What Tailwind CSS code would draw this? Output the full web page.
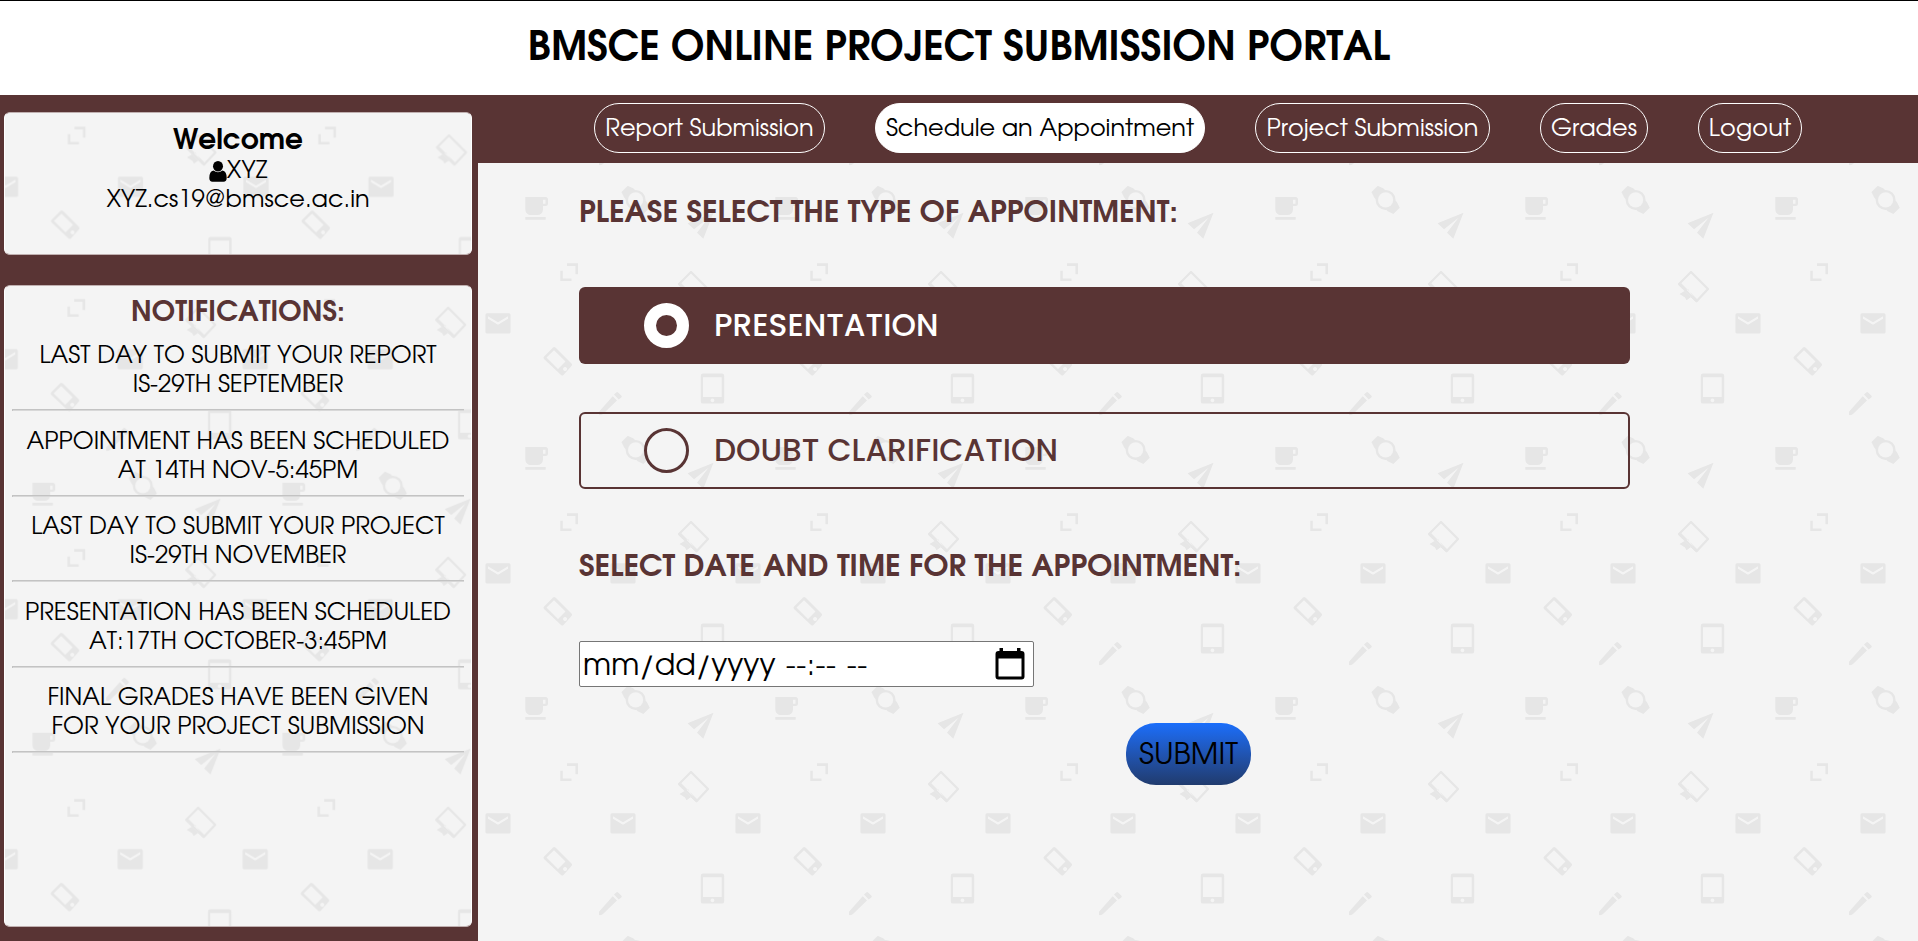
<!DOCTYPE html>
<html lang="en">
<head>
<meta charset="utf-8">
<title>BMSCE Online Project Submission Portal</title>
<script src="https://cdn.jsdelivr.net/npm/@tailwindcss/browser@4"></script>
</head>
<body class="h-[941px] overflow-hidden bg-white font-['Century_Gothic','TeX_Gyre_Adventor','Lato',sans-serif] text-black [font-kerning:none]">
<svg class="absolute size-0" aria-hidden="true">
  <defs>
    <g id="doodles" fill="#e6e6e6">
      <path d="M47.3 37H67.5a2.5 2.5 0 0 1 2.5 2.5v4a2.5 2.5 0 0 1-2.5 2.5H65v3.500a5.500 5.500 0 0 1-5.500 5.500h-6.700a5.500 5.500 0 0 1-5.500-5.500zM65 39.700v4h2.500v-4zM47.300 57h20.400v2.800H47.300z" fill-rule="evenodd"/>
      <g transform="translate(157.600 39.900) rotate(45)"><path d="M-15.500-4.500L-9.500-6.500H9.500L15.500-4.500V4.500L9.500 6.500H-9.500L-15.500 4.500z"/><circle r="10"/><circle r="7.600" fill="#f4f4f4"/></g>
      <path d="M235.500 52.700L209.500 63.300L216 69.200L230.500 57.800L219 72.700L225.300 78.700z"/>
      <path d="M89 103.300h11v11h-2.600v-8.400H89zM82.300 110.700h2.500v7.800h8.700v2.500H82.300z"/>
      <path d="M213 112L201 124L218.500 141.300L230 129z" fill="none" stroke="#e6e6e6" stroke-width="2.300" stroke-linejoin="round"/>
      <path d="M200.500 125L218 142L220.500 140.500L203 123zM201.500 134L210 129L214.500 136L208.500 140.300L207 137.500z"/>
      <path id="mail" d="M9 153.300H31a1.600 1.600 0 0 1 1.600 1.600V172a1.600 1.600 0 0 1-1.600 1.600H9A1.600 1.600 0 0 1 7.400 172V155A1.600 1.600 0 0 1 9 153.300zM10 156.200V158.700L20 164.700L30 158.700V156.200L20 162.200z" fill-rule="evenodd"/>
      <use href="#mail" x="125"/>
      <path d="M75 187.500a1.800 1.800 0 0 1 2.500 0L93.500 203.500a1.800 1.800 0 0 1 0 2.500L85.500 215a1.800 1.800 0 0 1-2.500 0L66 199a1.800 1.800 0 0 1 0-2.500zM76 190.300L68.500 197.600L80 209L87.500 201.500zM87 207a2 2 0 1 0 .1 0z" fill-rule="evenodd"/>
      <path d="M225 213.600H244a2.200 2.200 0 0 1 2.200 2.200V241.400a2.200 2.200 0 0 1-2.200 2.200H225a2.200 2.200 0 0 1-2.200-2.200V215.800A2.200 2.200 0 0 1 225 213.600zM225 217.300V237H243.700V217.300zM234.400 238.500a1.900 1.900 0 1 0 .1 0z" fill-rule="evenodd"/>
      <path id="pencil" d="M121 251.700L134.700 236.200L139 240.500L125 254Q123.500 255.500 121 255zM136 234.500L138.500 232.200Q139.500 231.700 140.500 232.700L143.500 235.700Q144 236.500 143.300 237.500L140.800 239.500z"/>
      <use href="#pencil" y="-250"/>
    </g>
    <pattern id="main-pattern" width="250" height="250" patternUnits="userSpaceOnUse" patternTransform="translate(0 -3)"><use href="#doodles"/></pattern>
    <pattern id="welcome-pattern" width="250.500" height="250" patternUnits="userSpaceOnUse" patternTransform="translate(-19.500 -89.600)"><use href="#doodles"/></pattern>
    <pattern id="notice-pattern" width="250" height="250" patternUnits="userSpaceOnUse" patternTransform="translate(-19.800 -90.200)"><use href="#doodles"/></pattern>
  </defs>
</svg>

<header class="flex h-[95px] items-center justify-center border-t border-black pt-[2px]">
  <h1 class="text-[40px] leading-[48px] font-bold whitespace-nowrap">BMSCE ONLINE PROJECT SUBMISSION PORTAL</h1>
</header>

<div class="flex h-[846px]">
  <aside class="flex w-[478px] shrink-0 flex-col bg-[#593434] pt-[17px] pr-[6px] pl-[4px]">
    <section class="relative isolate flex h-[143px] flex-col items-center overflow-hidden rounded-[6px] border border-x-white border-y-[#c0b0b0] bg-[#f4f4f4] pt-[12px]">
      <svg class="absolute inset-0 -z-10 size-full"><rect width="100%" height="100%" fill="url(#welcome-pattern)"/></svg>
      <h2 class="text-[28px] leading-[32px] font-bold">Welcome</h2>
      <p class="flex items-center text-[24px] leading-[29px]">
        <svg class="mb-[1px] h-[21px] w-[18px]" viewBox="0 0 18 21"><ellipse cx="9" cy="5.300" rx="5" ry="5.300"/><path d="M4.500 9.600Q9 13 13.500 9.600Q17.700 10.500 17.700 17Q17.700 20.700 14.500 20.700H3.500Q.3 20.700.3 17Q.3 10.500 4.500 9.600z"/></svg>
        <span>XYZ</span>
      </p>
      <p class="text-[24px] leading-[29px]">XYZ.cs19@bmsce.ac.in</p>
    </section>

    <section class="relative isolate mt-[30px] flex h-[642px] flex-col overflow-hidden rounded-[6px] border border-x-white border-y-[#c0b0b0] bg-[#f4f4f4] px-[7px] pt-[10px] text-center">
      <svg class="absolute inset-0 -z-10 size-full"><rect width="100%" height="100%" fill="url(#notice-pattern)"/></svg>
      <h2 class="mb-[12px] text-[28px] leading-[34px] font-bold text-[#593434]">NOTIFICATIONS:</h2>
      <ul class="text-[24px] leading-[29px] whitespace-nowrap">
        <li class="h-[85.500px]">LAST DAY TO SUBMIT YOUR REPORT<br>IS-29TH SEPTEMBER<hr class="mt-[9px] h-[2px] border-t border-l border-[#c3c3c3] bg-[#d8d8d8]"></li>
        <li class="h-[85.500px]">APPOINTMENT HAS BEEN SCHEDULED<br>AT 14TH NOV-5:45PM<hr class="mt-[9px] h-[2px] border-t border-l border-[#c3c3c3] bg-[#d8d8d8]"></li>
        <li class="h-[85.500px]">LAST DAY TO SUBMIT YOUR PROJECT<br>IS-29TH NOVEMBER<hr class="mt-[9px] h-[2px] border-t border-l border-[#c3c3c3] bg-[#d8d8d8]"></li>
        <li class="h-[85.500px]">PRESENTATION HAS BEEN SCHEDULED<br>AT:17TH OCTOBER-3:45PM<hr class="mt-[9px] h-[2px] border-t border-l border-[#c3c3c3] bg-[#d8d8d8]"></li>
        <li class="h-[85.500px]">FINAL GRADES HAVE BEEN GIVEN<br>FOR YOUR PROJECT SUBMISSION<hr class="mt-[9px] h-[2px] border-t border-l border-[#c3c3c3] bg-[#d8d8d8]"></li>
      </ul>
    </section>
  </aside>

  <div class="flex grow flex-col">
    <nav class="flex h-[68px] items-start gap-[50px] bg-[#593434] pt-[8px] pl-[116px] text-[24px] whitespace-nowrap text-white">
      <a class="flex h-[50px] w-[231px] items-center justify-center rounded-[25px] border border-white pt-[4px]">Report Submission</a>
      <a class="flex h-[50px] w-[330px] items-center justify-center rounded-[25px] border border-white bg-white pt-[4px] text-black">Schedule an Appointment</a>
      <a class="flex h-[50px] w-[235px] items-center justify-center rounded-[25px] border border-white pt-[4px]">Project Submission</a>
      <a class="flex h-[50px] w-[108px] items-center justify-center rounded-[25px] border border-white pt-[4px]">Grades</a>
      <a class="flex h-[50px] w-[104px] items-center justify-center rounded-[25px] border border-white pt-[4px] tracking-[0.2px]">Logout</a>
    </nav>

    <main class="relative isolate flex grow flex-col items-start bg-[#f4f4f4] pt-[32px] pl-[101px]">
      <svg class="absolute inset-0 -z-10 size-full"><rect width="100%" height="100%" fill="url(#main-pattern)"/></svg>
      <h3 class="text-[30px] leading-[38px] font-bold whitespace-nowrap text-[#593434]">PLEASE SELECT THE TYPE OF APPOINTMENT:</h3>
      <div class="mt-[54px] flex h-[77px] w-[1051px] items-center rounded-[6px] bg-[#593434] pl-[65px] font-['Poppins','Inter',sans-serif] text-[31.200px] font-medium text-white">
        <span class="size-[45px] rounded-full border-[12px] border-white"></span>
        <span class="mb-[2px] ml-[25px] leading-[36px]">PRESENTATION</span>
      </div>
      <div class="mt-[48px] flex h-[77px] w-[1051px] items-center rounded-[6px] border-2 border-[#593434] pl-[63px] font-['Poppins','Inter',sans-serif] text-[31.200px] font-medium text-[#593434]">
        <span class="size-[45px] rounded-full border-[3px] border-[#593434]"></span>
        <span class="mb-[2px] ml-[25px] leading-[36px]">DOUBT CLARIFICATION</span>
      </div>
      <h3 class="mt-[60px] text-[30px] leading-[38px] font-bold whitespace-nowrap text-[#593434]">SELECT DATE AND TIME FOR THE APPOINTMENT:</h3>
      <div class="mt-[54px] flex h-[46px] w-[455px] items-center justify-between rounded-[2px] border border-[#767676] bg-white pr-[8px] pl-[3px] text-[30px] leading-[38px] whitespace-nowrap">
        <span class="pt-[5px]">mm/dd/yyyy<span class="tracking-[0.500px] [word-spacing:1.500px]"> --:-- --</span></span>
        <svg class="h-[32px] w-[30px]" viewBox="0 0 30 32"><path d="M4.500 0H8V3H22V0H25.500V3H26.500Q29.500 3 29.500 6V28.500Q29.500 31.500 26.500 31.500H3.500Q.5 31.500.5 28.500V6Q.5 3 3.500 3H4.500zM3.500 10.500V28.500H26.500V10.500z" fill-rule="evenodd"/></svg>
      </div>
      <button class="mt-[36px] ml-[547px] flex h-[62px] w-[125px] items-center justify-center rounded-[30px] bg-linear-to-b from-[#1a6efb] to-[#203b6e] pt-[5px] text-[30px] [font-kerning:none]">SUBMIT</button>
    </main>
  </div>
</div>
</body>
</html>
